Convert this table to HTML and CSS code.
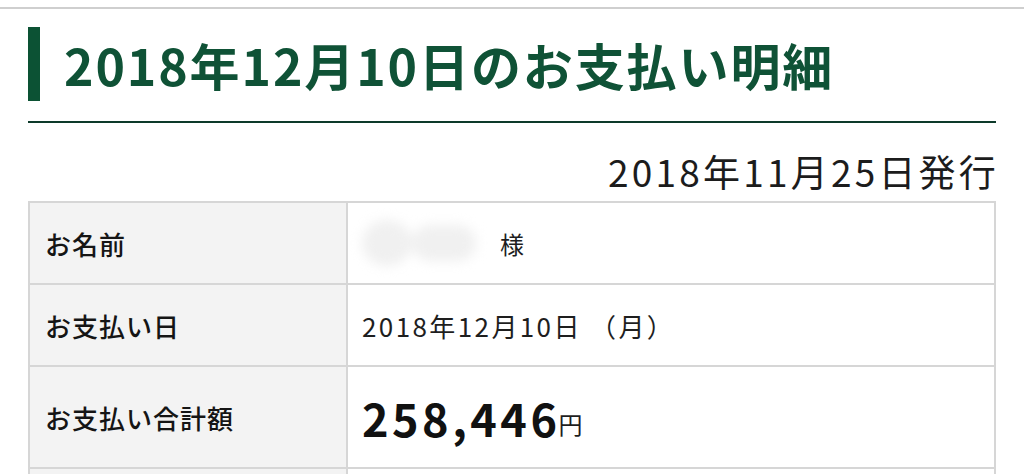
FILE: index.html
```html
<!DOCTYPE html>
<html lang="ja">
<head>
<meta charset="utf-8">
<title>お支払い明細</title>
<link rel="stylesheet" href="styles.css">
</head>
<body>
<div class="topline"></div>
<main class="page">
  <div class="title-wrap">
    <h1 class="title">2018年12月10日のお支払い明細</h1>
  </div>
  <p class="issued">2018年11月25日発行</p>
  <div class="table">
    <div class="row">
      <div class="label">お名前</div>
      <div class="value name"><span class="blur"><span class="blob b1"></span><span class="blob b2"></span></span><span class="sama">様</span></div>
    </div>
    <div class="row">
      <div class="label">お支払い日</div>
      <div class="value">2018年12月10日 （月）</div>
    </div>
    <div class="row tall">
      <div class="label">お支払い合計額</div>
      <div class="value"><span class="amount">258,446</span><span class="yen">円</span></div>
    </div>
    <div class="row">
      <div class="label"></div>
      <div class="value"></div>
    </div>
  </div>
</main>
</body>
</html>
```
FILE: styles.css
```css
html, body {
  margin: 0;
  padding: 0;
  background: #fff;
  overflow: hidden;
}
body {
  font-family: "Noto Sans CJK JP", "Noto Sans", sans-serif;
  color: #1a1a1a;
  padding-top: 7px;
}
.topline {
  height: 0;
  border-top: 2px solid #cfcfcf;
}
.page {
  padding: 0 28px;
}
.title-wrap {
  padding-top: 18px;
  padding-bottom: 20px;
  border-bottom: 2px solid #0d3a2a;
}
.title {
  margin: 0;
  height: 74px;
  display: flex;
  align-items: center;
  border-left: 12px solid #0c5234;
  padding-left: 24px;
  font-size: 50px;
  font-weight: 600;
  color: #0f5236;
  line-height: 1;
  letter-spacing: 1.9px;
}
.issued {
  margin: 0;
  padding-top: 28px;
  height: 50px;
  text-align: right;
  font-size: 37px;
  line-height: 40px;
  color: #1c1c1c;
  letter-spacing: 3.2px;
  margin-right: -3px;
}
.table {
  border-top: 2px solid #d6d6d6;
  border-left: 2px solid #d6d6d6;
  border-right: 2px solid #d6d6d6;
}
.row {
  display: grid;
  grid-template-columns: 318px 1fr;
  height: 80px;
  border-bottom: 2px solid #d6d6d6;
}
.row.tall {
  height: 100px;
}
.label {
  background: #f3f3f3;
  border-right: 2px solid #d6d6d6;
  display: flex;
  align-items: center;
  padding-left: 15px;
  font-size: 26px;
  font-weight: 500;
  letter-spacing: 1px;
  color: #151515;
}
.value {
  display: flex;
  align-items: center;
  padding-left: 14px;
  font-size: 26px;
  letter-spacing: 2.4px;
  color: #1e1e1e;
}
.name {
  gap: 22px;
}
.blur {
  display: flex;
  align-items: center;
  width: 116px;
  height: 50px;
  filter: blur(6px);
}
.blob {
  display: block;
  background: #f0f0f0;
  border-radius: 50%;
}
.b1 {
  width: 50px;
  height: 46px;
}
.b2 {
  width: 64px;
  height: 36px;
  border-radius: 18px;
}
.sama {
  font-size: 24px;
}
.amount {
  font-size: 45px;
  font-weight: 600;
  letter-spacing: 3.5px;
  color: #111;
}
.yen {
  font-size: 24px;
  letter-spacing: 0;
  margin-top: 12px;
  margin-left: -2px;
}
```
